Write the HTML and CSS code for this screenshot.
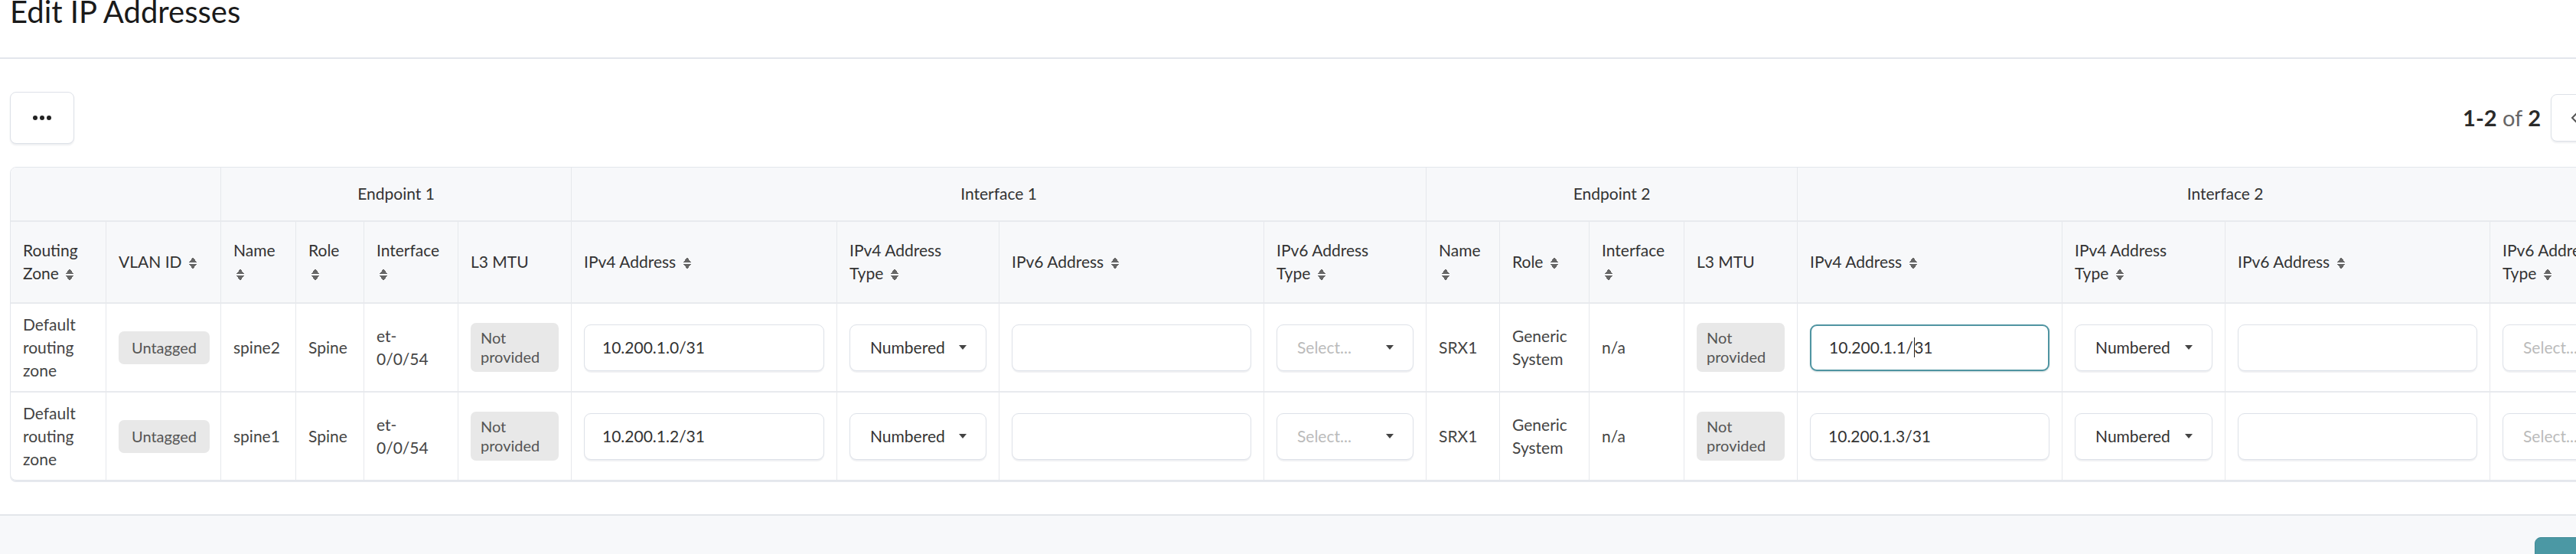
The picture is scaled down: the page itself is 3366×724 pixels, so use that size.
FILE: index.html
```html
<!DOCTYPE html>
<html>
    <head>
        <meta name="viewport" content="width=device-width, initial-scale=1.0">
        <link rel="stylesheet" href="styles.css">
    </head>
    <body>
        <div class="modal">
            <div class="modal-header">
                <h4 class="modal-title">Edit IP Addresses</h4>
            </div>

            <div class="modal-body">
                <div class="toolbar">
                    <button class="btn btn-more">
                        <svg width="24" height="6" viewBox="0 0 24 6">
                            <circle cx="3" cy="3" r="3"/>
                            <circle cx="12" cy="3" r="3"/>
                            <circle cx="21" cy="3" r="3"/>
                        </svg>
                    </button>
                    <div class="pager">
                        <span class="pager-text"><b>1-2</b> of <b>2</b></span>
                        <div class="pager-buttons">
                            <button class="btn btn-page">
                                <svg width="10" height="16" viewBox="0 0 10 16"><polyline points="8,2 2,8 8,14"/></svg>
                            </button>
                            <button class="btn btn-page">
                                <svg width="10" height="16" viewBox="0 0 10 16"><polyline points="2,2 8,8 2,14"/></svg>
                            </button>
                        </div>
                    </div>
                </div>

                <table class="ip-table">
                    <colgroup>
                        <col style="width: 125px">
                        <col style="width: 150px">
                        <col style="width: 98px">
                        <col style="width: 89px">
                        <col style="width: 123px">
                        <col style="width: 148px">
                        <col style="width: 347px">
                        <col style="width: 212px">
                        <col style="width: 346px">
                        <col style="width: 212px">
                        <col style="width: 96px">
                        <col style="width: 117px">
                        <col style="width: 124px">
                        <col style="width: 148px">
                        <col style="width: 346px">
                        <col style="width: 213px">
                        <col style="width: 346px">
                        <col style="width: 212px">
                    </colgroup>
                    <thead>
                        <tr class="group-row">
                            <th colspan="2"></th>
                            <th colspan="4">Endpoint 1</th>
                            <th colspan="4">Interface 1</th>
                            <th colspan="4">Endpoint 2</th>
                            <th colspan="4">Interface 2</th>
                        </tr>
                        <tr class="column-row">
                            <th>Routing Zone <i class="sort"></i></th>
                            <th>VLAN ID <i class="sort"></i></th>
                            <th>Name <i class="sort"></i></th>
                            <th>Role <i class="sort"></i></th>
                            <th>Interface <i class="sort"></i></th>
                            <th>L3 MTU</th>
                            <th>IPv4 Address <i class="sort"></i></th>
                            <th>IPv4 Address<br>Type <i class="sort"></i></th>
                            <th>IPv6 Address <i class="sort"></i></th>
                            <th>IPv6 Address<br>Type <i class="sort"></i></th>
                            <th>Name <i class="sort"></i></th>
                            <th>Role <i class="sort"></i></th>
                            <th>Interface <i class="sort"></i></th>
                            <th>L3 MTU</th>
                            <th>IPv4 Address <i class="sort"></i></th>
                            <th>IPv4 Address<br>Type <i class="sort"></i></th>
                            <th>IPv6 Address <i class="sort"></i></th>
                            <th>IPv6 Address<br>Type <i class="sort"></i></th>
                        </tr>
                    </thead>
                    <tbody>
                        <tr>
                            <td>Default routing zone</td>
                            <td><span class="badge">Untagged</span></td>
                            <td>spine2</td>
                            <td>Spine</td>
                            <td>et-0/0/54</td>
                            <td><span class="badge">Not provided</span></td>
                            <td class="field"><div class="input">10.200.1.0/31</div></td>
                            <td class="field"><div class="select">Numbered<i class="caret"></i></div></td>
                            <td class="field"><div class="input"></div></td>
                            <td class="field"><div class="select placeholder">Select...<i class="caret"></i></div></td>
                            <td>SRX1</td>
                            <td>Generic System</td>
                            <td>n/a</td>
                            <td><span class="badge">Not provided</span></td>
                            <td class="field"><div class="input focused">10.200.1.1/<span class="cursor"></span>31</div></td>
                            <td class="field"><div class="select">Numbered<i class="caret"></i></div></td>
                            <td class="field"><div class="input"></div></td>
                            <td class="field"><div class="select placeholder">Select...<i class="caret"></i></div></td>
                        </tr>
                        <tr>
                            <td>Default routing zone</td>
                            <td><span class="badge">Untagged</span></td>
                            <td>spine1</td>
                            <td>Spine</td>
                            <td>et-0/0/54</td>
                            <td><span class="badge">Not provided</span></td>
                            <td class="field"><div class="input">10.200.1.2/31</div></td>
                            <td class="field"><div class="select">Numbered<i class="caret"></i></div></td>
                            <td class="field"><div class="input"></div></td>
                            <td class="field"><div class="select placeholder">Select...<i class="caret"></i></div></td>
                            <td>SRX1</td>
                            <td>Generic System</td>
                            <td>n/a</td>
                            <td><span class="badge">Not provided</span></td>
                            <td class="field"><div class="input">10.200.1.3/31</div></td>
                            <td class="field"><div class="select">Numbered<i class="caret"></i></div></td>
                            <td class="field"><div class="input"></div></td>
                            <td class="field"><div class="select placeholder">Select...<i class="caret"></i></div></td>
                        </tr>
                    </tbody>
                </table>
            </div>

            <div class="modal-footer">
                <button class="btn btn-primary">Update</button>
            </div>
        </div>
    </body>
</html>
```

FILE: styles.css
```css
html,
body {
    margin: 0;
    overflow: hidden;
    background: #fff;
}

body {
    font-family: Lato, "Open Sans", sans-serif;
    font-size: 21px;
    line-height: 30px;
    color: #333;
}

.modal {
    width: 3478px;
}

.modal-header {
    height: 75px;
    padding: 0 13px;
    border-bottom: 2px solid #e3e6ec;
}

.modal-title {
    margin: 0;
    font-size: 40px;
    line-height: 30px;
    font-weight: 400;
    color: #1a1a1a;
}

.modal-body {
    padding: 43px 13px 44px;
}

.toolbar {
    display: flex;
    align-items: center;
    justify-content: space-between;
    margin-bottom: 30px;
}

.btn {
    display: flex;
    align-items: center;
    justify-content: center;
    padding: 0;
    background: #fff;
    border: 1.5px solid #dde1e8;
    border-radius: 8px;
    box-shadow: 0 2px 2px rgba(40, 50, 80, 0.08);
    font: inherit;
}

.btn-more {
    width: 84px;
    height: 68px;
}

.btn-more svg {
    fill: #222;
}

.pager {
    display: flex;
    align-items: center;
    gap: 13px;
}

.pager-text {
    font-size: 29px;
    color: #666;
}

.pager-text b {
    color: #2a2a2a;
    font-weight: 700;
}

.pager-buttons {
    display: flex;
    gap: 8px;
}

.btn-page {
    width: 62px;
    height: 62px;
}

.btn-page polyline {
    fill: none;
    stroke: #555;
    stroke-width: 2;
}

/* table */

.ip-table {
    width: 3454px;
    table-layout: fixed;
    border-collapse: separate;
    border-spacing: 0;
    border: 1px solid #e3e6eb;
    border-radius: 8px;
    box-shadow: 0 2px 0 #e6e9ee;
}

.ip-table th,
.ip-table td {
    padding: 12px 16px;
    border-right: 1px solid #e6e8ec;
    border-bottom: 2px solid #e8eaee;
    text-align: left;
    vertical-align: middle;
    font-weight: 400;
}

.ip-table th:last-child,
.ip-table td:last-child {
    border-right: 0;
}

.ip-table tbody tr:last-child td {
    border-bottom: 0;
}

.ip-table thead th {
    background: #f7f8fa;
    color: #333;
}

.group-row th {
    text-align: center;
    padding: 19px 16px 20px;
}

.group-row th:first-child {
    border-top-left-radius: 7px;
}

.column-row th {
    padding: 22px 16px 23px;
}

.ip-table td {
    color: #444;
}

/* up and down arrows of a sortable column */
.sort {
    display: inline-block;
    width: 10px;
    height: 16px;
    margin-left: 4px;
    vertical-align: -2px;
    background:
        linear-gradient(to bottom right, transparent 50%, #666 50%) 0 0 / 5px 7px no-repeat,
        linear-gradient(to bottom left, transparent 50%, #666 50%) 5px 0 / 5px 7px no-repeat,
        linear-gradient(to top right, transparent 50%, #666 50%) 0 9px / 5px 7px no-repeat,
        linear-gradient(to top left, transparent 50%, #666 50%) 5px 9px / 5px 7px no-repeat;
}

.badge {
    display: inline-block;
    padding: 9px 17px;
    background: #e8e8e8;
    border-radius: 7px;
    font-size: 20px;
    line-height: 25px;
    color: #555;
    vertical-align: middle;
}

.ip-table td:nth-child(6) .badge,
.ip-table td:nth-child(14) .badge {
    padding: 7px 13px;
}

.field {
    padding: 12px 17px;
}

.input,
.select {
    box-sizing: border-box;
    display: flex;
    align-items: center;
    width: 100%;
    height: 61px;
    padding: 0 23px;
    background: #fff;
    border: 1.5px solid #dde1e8;
    border-radius: 9px;
    box-shadow: 0 1.5px 1px rgba(40, 50, 80, 0.07);
    color: #333;
    white-space: nowrap;
}

.input.focused {
    border: 2px solid #4f94a1;
    box-shadow: 0 1px 2px rgba(40, 90, 100, 0.25);
}

.cursor {
    display: inline-block;
    width: 1.5px;
    height: 26px;
    margin: 0 -1px 0 1px;
    background: #222;
}

.select {
    padding: 0 25px 0 26px;
}

.select.placeholder {
    color: #bbb;
}

.caret {
    margin-left: auto;
    width: 0;
    height: 0;
    border-left: 5px solid transparent;
    border-right: 5px solid transparent;
    border-top: 6px solid #444;
}

.modal-footer {
    display: flex;
    justify-content: flex-end;
    padding: 28px 13px;
    background: #f7f8fa;
    border-top: 2px solid #e3e6ea;
}

.btn-primary {
    width: 153px;
    height: 60px;
    background: #4b98a4;
    border-color: #3f8a96;
    color: #fff;
}
```
